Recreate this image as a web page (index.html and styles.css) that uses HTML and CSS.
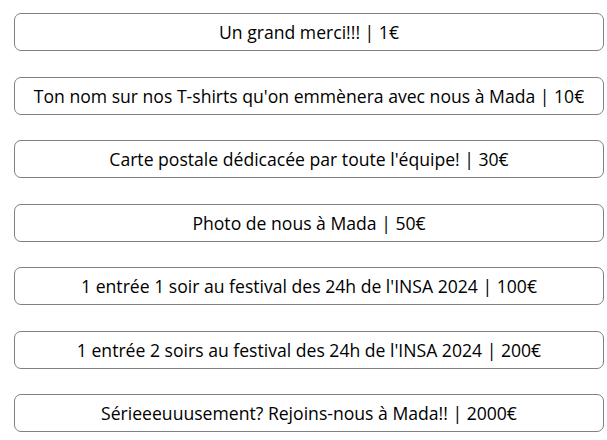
FILE: index.html
```html
<!DOCTYPE html>
<html lang="fr">
<head>
    <meta charset="UTF-8">
    <meta name="viewport" content="width=device-width, initial-scale=1.0">
    <link rel="stylesheet" href="styles.css">
    <title>Contreparties</title>
</head>
<body>
    <div class="rewards">
        <button class="reward">Un grand merci!!! | 1€</button>
        <button class="reward">Ton nom sur nos T-shirts qu'on emmènera avec nous à Mada | 10€</button>
        <button class="reward">Carte postale dédicacée par toute l'équipe! | 30€</button>
        <button class="reward">Photo de nous à Mada | 50€</button>
        <button class="reward">1 entrée 1 soir au festival des 24h de l'INSA 2024 | 100€</button>
        <button class="reward">1 entrée 2 soirs au festival des 24h de l'INSA 2024 | 200€</button>
        <button class="reward">Sérieeeuuusement? Rejoins-nous à Mada!! | 2000€</button>
    </div>
</body>
</html>
```

FILE: styles.css
```css
body {
    margin: 0;
    background-color: #fff;
    font-family: "Open Sans", sans-serif;
}

.rewards {
    display: flex;
    flex-direction: column;
    gap: 25.5px;
    padding: 13px 4px 0 14px;
}

.reward {
    width: 590px;
    height: 38px;
    padding: 0 10px;
    border: 1px solid #808080;
    border-radius: 7px;
    background-color: #fff;
    color: #000;
    font-family: "Open Sans", sans-serif;
    font-size: 17.6px;
    text-align: center;
    cursor: pointer;
}

.reward:hover {
    background-color: #f2f2f2;
}
```
